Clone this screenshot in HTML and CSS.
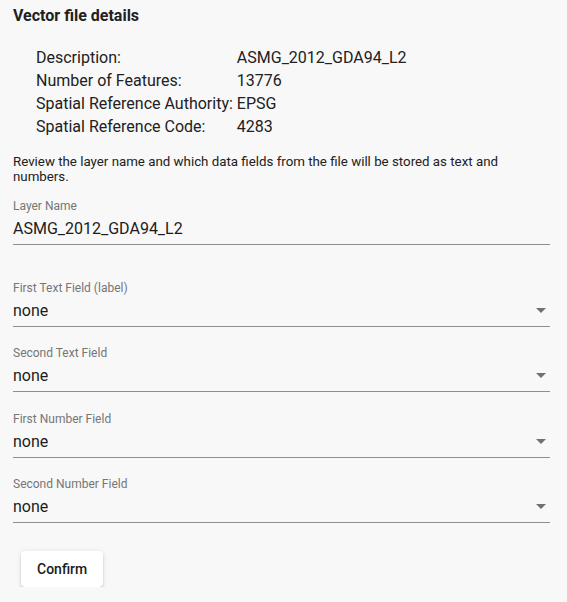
FILE: index.html
```html
<!DOCTYPE html>
<html lang="en">
<head>
<meta charset="utf-8">
<title>Vector file details</title>
<link rel="stylesheet" href="styles.css">
</head>
<body>
<main class="page">
  <h2 class="title">Vector file details</h2>
  <div class="details">
    <span class="key">Description:</span><span class="val">ASMG_2012_GDA94_L2</span>
    <span class="key">Number of Features:</span><span class="val">13776</span>
    <span class="key">Spatial Reference Authority:</span><span class="val">EPSG</span>
    <span class="key">Spatial Reference Code:</span><span class="val">4283</span>
  </div>
  <p class="intro">Review the layer name and which data fields from the file will be stored as text and numbers.</p>

  <div class="field field-name">
    <label class="label">Layer Name</label>
    <div class="input"><span class="value">ASMG_2012_GDA94_L2</span></div>
  </div>

  <div class="selects">
    <div class="field">
      <label class="label">First Text Field (label)</label>
      <div class="input"><span class="value">none</span><svg class="arrow" viewBox="7 10 10 5" width="10" height="5"><path d="M7 10l5 5 5-5z"/></svg></div>
    </div>
    <div class="field">
      <label class="label">Second Text Field</label>
      <div class="input"><span class="value">none</span><svg class="arrow" viewBox="7 10 10 5" width="10" height="5"><path d="M7 10l5 5 5-5z"/></svg></div>
    </div>
    <div class="field">
      <label class="label">First Number Field</label>
      <div class="input"><span class="value">none</span><svg class="arrow" viewBox="7 10 10 5" width="10" height="5"><path d="M7 10l5 5 5-5z"/></svg></div>
    </div>
    <div class="field">
      <label class="label">Second Number Field</label>
      <div class="input"><span class="value">none</span><svg class="arrow" viewBox="7 10 10 5" width="10" height="5"><path d="M7 10l5 5 5-5z"/></svg></div>
    </div>
  </div>

  <button class="btn" type="button">Confirm</button>
</main>
</body>
</html>
```
FILE: styles.css
```css
html, body {
  margin: 0;
  padding: 0;
  background: #f8f8f8;
}
body {
  font-family: Roboto, "Liberation Sans", Arial, sans-serif;
  color: #212121;
}
.page {
  padding: 4px 17px 0 13px;
  display: flex;
  flex-direction: column;
  align-items: stretch;
}
.title {
  margin: 0;
  font-size: 16px;
  font-weight: 700;
  line-height: 24px;
}
.details {
  margin: 19.4px 0 0 23px;
  display: grid;
  grid-template-columns: max-content max-content;
  column-gap: 4px;
  font-size: 16px;
  line-height: 22.8px;
}
.intro {
  margin: 15px 0 0;
  font-size: 13.3px;
  line-height: 15px;
}
.field {
  display: flex;
  flex-direction: column;
}
.field-name {
  margin-top: 15.3px;
}
.label {
  font-size: 12px;
  line-height: 14px;
  color: #767676;
}
.input {
  display: flex;
  align-items: center;
  justify-content: space-between;
  padding: 6px 0;
  border-bottom: 1px solid #8f8f8f;
  font-size: 16px;
  line-height: 19px;
  color: #1c1c1c;
}
.arrow {
  fill: #717171;
  margin-right: 4px;
}
.selects {
  margin-top: 36px;
  display: flex;
  flex-direction: column;
  gap: 19.33px;
}
.btn {
  align-self: flex-start;
  margin: 28px 0 0 8px;
  padding: 6px 16px;
  min-width: 64px;
  border: 0;
  border-radius: 4px;
  background: #fff;
  font-family: Roboto, "Liberation Sans", Arial, sans-serif;
  font-size: 14px;
  font-weight: 500;
  line-height: 24px;
  color: #1c1c1c;
  box-shadow: 0 3px 1px -2px rgba(0,0,0,0.2), 0 2px 2px 0 rgba(0,0,0,0.14), 0 1px 5px 0 rgba(0,0,0,0.12);
}
```
